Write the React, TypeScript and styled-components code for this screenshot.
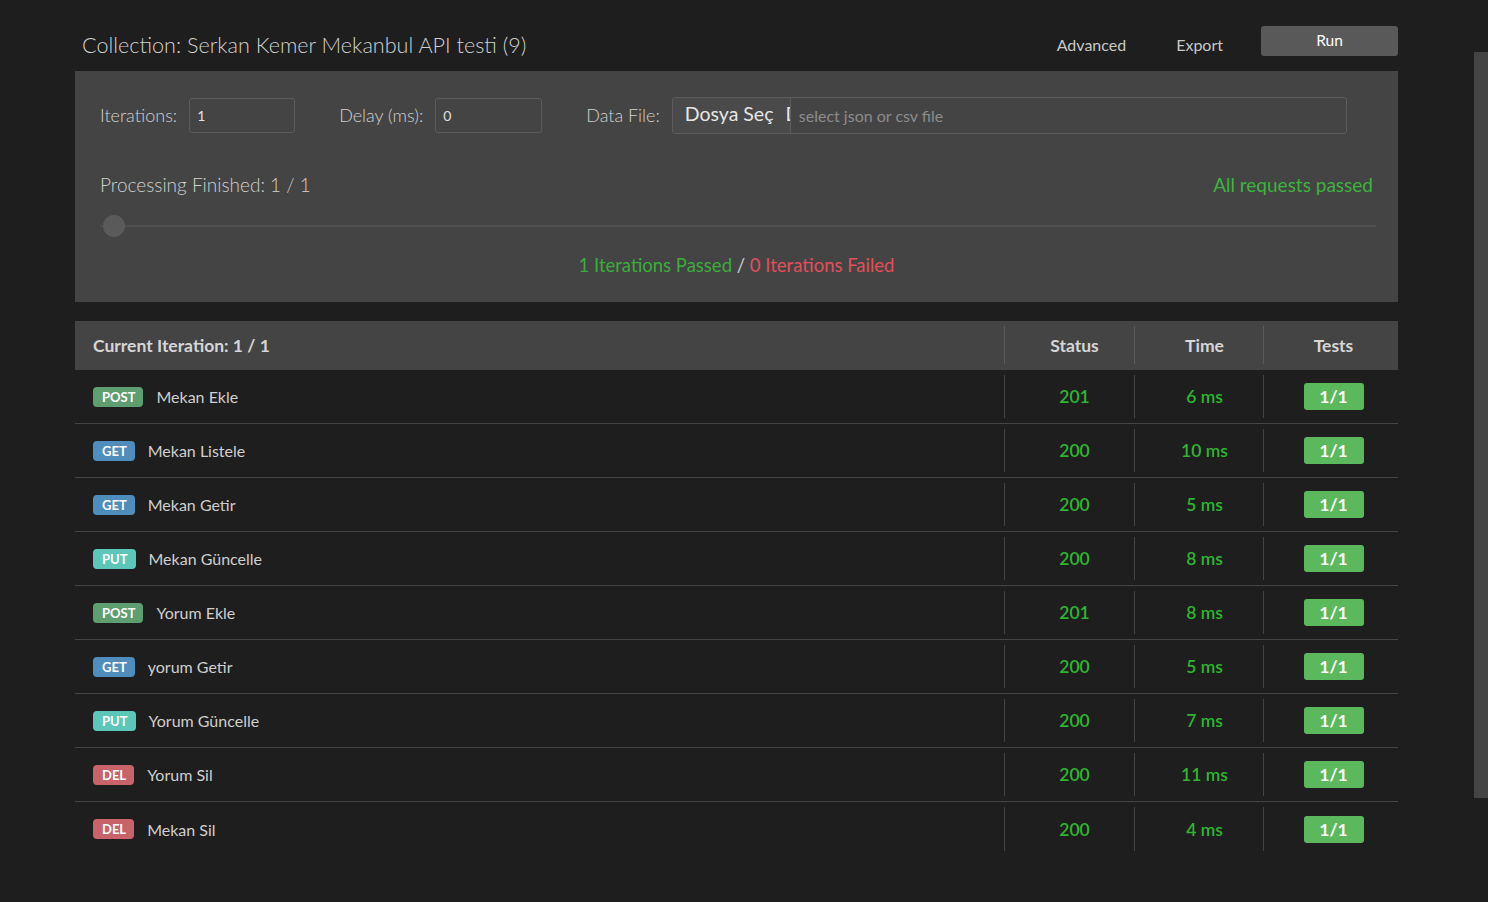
import React from "react";
import styled, { createGlobalStyle } from "styled-components";

const Global = createGlobalStyle`
  html, body { margin: 0; padding: 0; background: #1e1e1e; }
  body { font-family: Lato, "Open Sans", sans-serif; color: #cccccc; }
  * { box-sizing: border-box; }
`;

const Page = styled.div`
  width: 1323px;
  margin-left: 75px;
  padding-bottom: 46px;
`;

const TopBar = styled.div`
  height: 71px;
  display: flex;
  align-items: flex-start;
  padding-top: 26px;
`;

const Title = styled.h1`
  margin: 0;
  flex: 1;
  padding-left: 7px;
  padding-top: 4px;
  font-size: 21.6px;
  font-weight: 300;
  color: #d0d0d0;
  line-height: 30px;
`;

const LinkButton = styled.button<{ gap: number }>`
  background: none;
  border: none;
  color: #c8c8c8;
  font-family: inherit;
  font-size: 16px;
  padding: 0;
  margin-right: ${(p) => p.gap}px;
  line-height: 30px;
  margin-top: 4px;
`;

const RunButton = styled.button`
  width: 137px;
  height: 30px;
  background: #595959;
  border: none;
  border-radius: 3px;
  color: #ffffff;
  font-family: inherit;
  font-size: 15.5px;
  padding: 0 0 2px;
`;

const Panel = styled.section`
  background: #444444;
  padding: 25px 25px 0 25px;
  height: 231px;
`;

const OptionsRow = styled.div`
  display: flex;
  align-items: center;
  height: 38px;
`;

const Label = styled.label`
  font-size: 18px;
  font-weight: 300;
  color: #d0d0d0;
  margin-right: 12px;
`;

const NumberInput = styled.div<{ w: number }>`
  width: ${(p) => p.w}px;
  height: 35px;
  border: 1px solid #5c5c5c;
  border-radius: 3px;
  display: flex;
  align-items: center;
  padding-left: 7px;
  font-size: 14px;
  color: #e0e0e0;
  margin-right: 44px;
`;

const FileBox = styled.div`
  width: 675px;
  height: 37px;
  border: 1px solid #5c5c5c;
  border-radius: 3px;
  display: flex;
  align-items: stretch;
  overflow: hidden;
`;

const FileButton = styled.div`
  width: 118px;
  flex-shrink: 0;
  background: #4a4a4a;
  border-right: 1px solid #5c5c5c;
  display: flex;
  align-items: center;
  padding: 0 0 3px 12px;
  font-size: 19.5px;
  color: #e6e6e6;
  white-space: nowrap;
  overflow: hidden;
`;

const FileNote = styled.span`
  display: inline-block;
  width: 6px;
  overflow: hidden;
  margin-left: 12px;
`;

const FilePlaceholder = styled.div`
  display: flex;
  align-items: center;
  padding-left: 8px;
  font-size: 16px;
  color: #8c8c8c;
`;

const StatusRow = styled.div`
  display: flex;
  justify-content: space-between;
  align-items: center;
  margin-top: 36px;
  height: 28px;
`;

const StatusText = styled.div<{ color: string; light?: boolean }>`
  font-size: 19px;
  font-weight: ${(p) => (p.light ? 300 : 400)};
  color: ${(p) => p.color};
`;

const SliderTrack = styled.div`
  position: relative;
  height: 22px;
  margin-top: 17px;
  margin-right: -3px;
  display: flex;
  align-items: center;
`;

const TrackLine = styled.div`
  flex: 1;
  height: 2px;
  background: #4f4f4f;
`;

const Thumb = styled.div`
  position: absolute;
  left: 3px;
  top: 0;
  width: 22px;
  height: 22px;
  border-radius: 50%;
  background: #5a5a5a;
`;

const Summary = styled.div`
  text-align: center;
  margin-top: 16px;
  font-size: 18.5px;
  line-height: 24px;
`;

const Colored = styled.span<{ color: string }>`
  color: ${(p) => p.color};
`;

const Table = styled.div`
  margin-top: 19px;
`;

const Grid = styled.div<{ head?: boolean }>`
  display: grid;
  grid-template-columns: 1fr 130px 129px 135px;
  height: ${(p) => (p.head ? 49 : 54)}px;
  background: ${(p) => (p.head ? "#444444" : "transparent")};
  border-bottom: ${(p) => (p.head ? "none" : "1px solid #444444")};
  align-items: stretch;
  &:last-child {
    border-bottom: none;
  }
`;

const NameCell = styled.div<{ head?: boolean }>`
  display: flex;
  align-items: center;
  padding-left: 18px;
  font-size: ${(p) => (p.head ? 17.5 : 16)}px;
  font-weight: ${(p) => (p.head ? 700 : 400)};
  color: ${(p) => (p.head ? "#d6d6d6" : "#cfcfcf")};
`;

const Cell = styled.div<{ head?: boolean; shift: number }>`
  display: flex;
  align-items: center;
  justify-content: center;
  padding-left: ${(p) => p.shift}px;
  border-left: 1px solid ${(p) => (p.head ? "#5a5a5a" : "#444444")};
  margin: ${(p) => (p.head ? "5px 0 6px" : "5px 0 5px")};
  font-size: 17.5px;
  font-weight: ${(p) => (p.head ? 700 : 600)};
  color: ${(p) => (p.head ? "#d6d6d6" : "#2fb52f")};
`;

const methodColors: Record<string, string> = {
  POST: "#5f9e70",
  GET: "#4f8dbd",
  PUT: "#5cc7b8",
  DEL: "#c8636a",
};

const Badge = styled.span<{ method: string }>`
  display: inline-flex;
  align-items: center;
  justify-content: center;
  height: 20px;
  padding: 0 8px 0 9px;
  border-radius: 4px;
  background: ${(p) => methodColors[p.method]};
  color: #ffffff;
  font-size: 13px;
  font-weight: 700;
  margin-right: 13px;
`;

const TestBadge = styled.span`
  width: 60px;
  height: 27px;
  border-radius: 3px;
  background: #5cb85c;
  color: #ffffff;
  font-size: 17.5px;
  font-weight: 700;
  display: flex;
  align-items: center;
  justify-content: center;
`;

const ScrollBar = styled.div`
  position: fixed;
  right: 0;
  top: 52px;
  width: 14px;
  height: 746px;
  background: #444444;
`;

const rows = [
  ["POST", "Mekan Ekle", "201", "6 ms"],
  ["GET", "Mekan Listele", "200", "10 ms"],
  ["GET", "Mekan Getir", "200", "5 ms"],
  ["PUT", "Mekan Güncelle", "200", "8 ms"],
  ["POST", "Yorum Ekle", "201", "8 ms"],
  ["GET", "yorum Getir", "200", "5 ms"],
  ["PUT", "Yorum Güncelle", "200", "7 ms"],
  ["DEL", "Yorum Sil", "200", "11 ms"],
  ["DEL", "Mekan Sil", "200", "4 ms"],
];

export default function App() {
  return (
    <>
      <Global />
      <Page>
        <TopBar>
          <Title>Collection: Serkan Kemer Mekanbul API testi (9)</Title>
          <LinkButton gap={50}>Advanced</LinkButton>
          <LinkButton gap={38}>Export</LinkButton>
          <RunButton>Run</RunButton>
        </TopBar>
        <Panel>
          <OptionsRow>
            <Label>Iterations:</Label>
            <NumberInput w={106}>1</NumberInput>
            <Label>Delay (ms):</Label>
            <NumberInput w={107}>0</NumberInput>
            <Label>Data File:</Label>
            <FileBox>
              <FileButton>
                Dosya Seç<FileNote>D</FileNote>
              </FileButton>
              <FilePlaceholder>select json or csv file</FilePlaceholder>
            </FileBox>
          </OptionsRow>
          <StatusRow>
            <StatusText color="#d0d0d0" light>
              Processing Finished: 1 / 1
            </StatusText>
            <StatusText color="#3db33d">All requests passed</StatusText>
          </StatusRow>
          <SliderTrack>
            <TrackLine />
            <Thumb />
          </SliderTrack>
          <Summary>
            <Colored color="#3aad3a">1 Iterations Passed</Colored>
            <Colored color="#d0d0d0"> / </Colored>
            <Colored color="#e0505a">0 Iterations Failed</Colored>
          </Summary>
        </Panel>
        <Table>
          <Grid head>
            <NameCell head>Current Iteration: 1 / 1</NameCell>
            <Cell head shift={10}>Status</Cell>
            <Cell head shift={11}>Time</Cell>
            <Cell head shift={5}>Tests</Cell>
          </Grid>
          {rows.map(([m, name, status, time], i) => (
            <Grid key={i}>
              <NameCell>
                <Badge method={m}>{m}</Badge>
                {name}
              </NameCell>
              <Cell shift={10}>{status}</Cell>
              <Cell shift={11}>{time}</Cell>
              <Cell shift={5}>
                <TestBadge>1/1</TestBadge>
              </Cell>
            </Grid>
          ))}
        </Table>
      </Page>
      <ScrollBar />
    </>
  );
}
